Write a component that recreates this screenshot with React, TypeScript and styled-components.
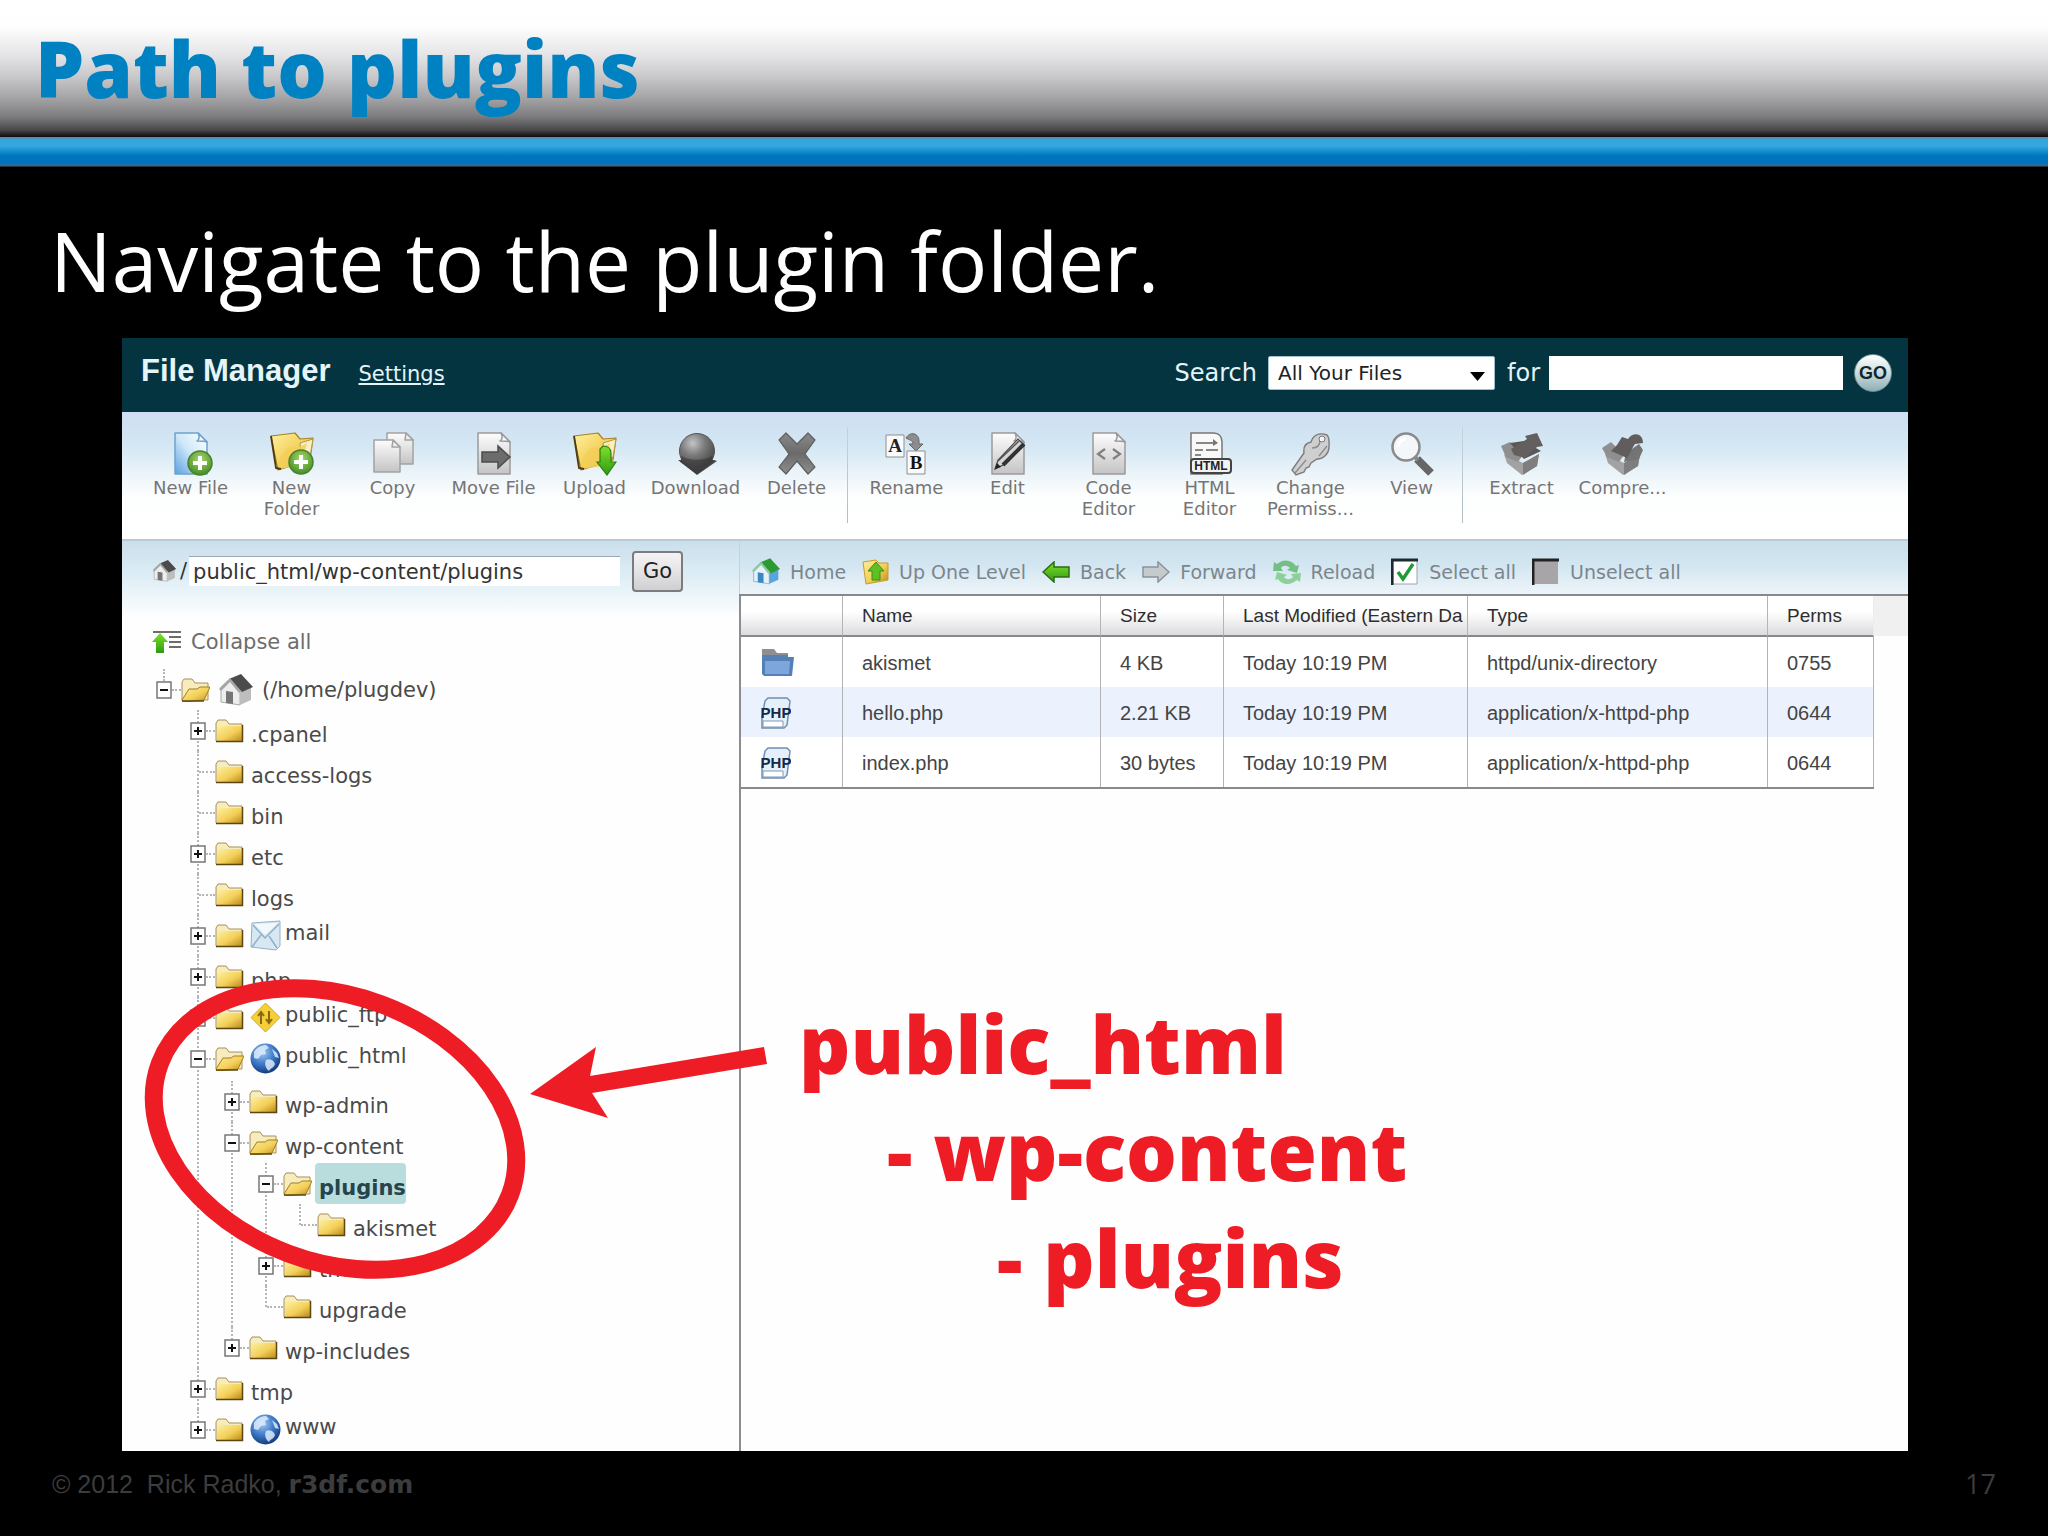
import React from "react";
import styled, { createGlobalStyle, css } from "styled-components";

const UI = `"DejaVu Sans", Verdana, sans-serif`;
const ARIAL = `"Liberation Sans", Arial, sans-serif`;
const SLIDE = `"Open Sans", "Noto Sans", sans-serif`;
const RED = "#ee1c25";

const GlobalStyle = createGlobalStyle`
  * { box-sizing: border-box; }
  body { margin: 0; background: #000; font-family: ${ARIAL}; }
  button { font: inherit; color: inherit; background: none; border: 0; padding: 0; cursor: pointer; }
  a { color: inherit; text-decoration: none; }
`;

/* ---------- slide ---------- */

const Slide = styled.main`
  display: flex;
  flex-direction: column;
  min-height: 100vh;
  background: #000;
`;

const SlideHeader = styled.header`
  display: flex;
  align-items: center;
  height: 137px;
  padding: 0 35px 2px;
  background: linear-gradient(#fff 0, #fefefe 26px, #e6e6e8 54px, #c8c8cb 77px, #a0a0a3 100px, #7b7b7e 117px, #484848 130px, #0c0c0c 137px);
`;

const SlideTitle = styled.h1`
  margin: 0;
  font: 800 78px/108px ${SLIDE};
  color: #0081c2;
`;

const BlueBar = styled.div`
  height: 30px;
  background: linear-gradient(#6a8394 0, #34a6de 3px, #34a8e0 9px, #0b85c8 16px, #0074be 19px, #0073bc 26px, #47647c 29px, #000 30px);
`;

const Lead = styled.p`
  margin: 0;
  padding: 37px 50px 21px;
  font: 400 82px/113px ${SLIDE};
  color: #fff;
`;

const Stage = styled.div`
  padding: 0 140px 0 122px;
`;

const SlideFooter = styled.footer`
  display: flex;
  justify-content: space-between;
  padding: 16px 52px;
  font: 25px/34px ${ARIAL};
  color: #3c3c3e;
  white-space: pre;
`;

const Site = styled.a`
  font: bold 25px/34px ${UI};
`;

const PageNumber = styled.span`
  font: 27px/34px ${SLIDE};
`;

/* ---------- file manager ---------- */

const Manager = styled.section`
  position: relative;
  background: #fefefe;
`;

const TopBar = styled.div`
  display: flex;
  justify-content: space-between;
  align-items: center;
  height: 74px;
  padding: 0 16px 4px 19px;
  background: #033440;
  color: #e4f5fa;
`;

const Brand = styled.div`
  display: flex;
  align-items: baseline;
  gap: 28px;
  padding-bottom: 5px;
`;

const BrandName = styled.h2`
  margin: 0;
  font: bold 31px/38px ${ARIAL};
`;

const SettingsLink = styled.a`
  font: 21px/26px ${UI};
  text-decoration: underline;
`;

const SearchForm = styled.form`
  display: flex;
  align-items: center;
  font: 24px/30px ${UI};
`;

const ScopeBox = styled.span`
  position: relative;
  display: flex;
  margin: 0 12px 0 11px;
  svg { position: absolute; right: 10px; top: 16px; pointer-events: none; }
`;

const ScopeSelect = styled.select`
  appearance: none;
  width: 227px;
  height: 34px;
  padding: 0 9px;
  border: 1px solid #9fc0cc;
  border-radius: 2px;
  background: #fff;
  color: #222;
  font: 20px/30px ${UI};
`;

const SearchInput = styled.input`
  width: 294px;
  height: 34px;
  margin: 0 11px 0 9px;
  padding: 0 8px;
  border: 0;
  background: #fff;
  font: 20px/30px ${UI};
`;

const RoundGo = styled.button`
  width: 38px;
  height: 38px;
  border: 1px solid #6d8a92;
  border-radius: 50%;
  background: linear-gradient(#fff, #cfdfe2 45%, #8fb0b6);
  color: #10262c;
  font: bold 18px/34px ${ARIAL};
  text-align: center;
`;

const Toolbar = styled.div`
  display: flex;
  align-items: flex-start;
  height: 127px;
  padding: 15px 18px 0;
  background: linear-gradient(#cddff1 0, #d4e7f3 34px, #fdfefe 84px, #fff);
`;

const Divider = styled.span`
  width: 1px;
  height: 96px;
  margin-right: 8px;
  background: linear-gradient(#c4d4dc, #b4bcc2);
`;

const Tool = styled.button`
  display: flex;
  flex-direction: column;
  align-items: center;
  width: 101px;
  padding-top: 5px;
  color: #757575;
  font: 18px/21px ${UI};
  text-align: center;
  svg { display: block; margin-bottom: 1px; }
  span { max-width: 96px; }
`;

const Panes = styled.div`
  display: grid;
  grid-template-columns: 617px minmax(0, 1fr);
  border-top: 2px solid #b7cad5;
`;

const Side = styled.aside`
  padding: 9px 0 1px 30px;
  background: linear-gradient(#cbdfeb 0, #dcedf5 34px, #fefefe 76px);
`;

const PathForm = styled.form`
  display: flex;
  align-items: center;
  height: 42px;
  color: #333;
  font: 21px/28px ${UI};
  svg { margin-right: 3px; }
  label { margin-right: 2px; }
`;

const PathInput = styled.input`
  width: 431px;
  height: 30px;
  margin-right: 12px;
  padding: 0 4px;
  border: 0;
  border-top: 1px solid #9aa9b1;
  background: #fff;
  color: #333;
  font: 21px/28px ${UI};
`;

const GoButton = styled.button`
  width: 51px;
  height: 41px;
  border: 2px solid #7c7c80;
  border-radius: 4px;
  background: linear-gradient(#f4f4f4, #e4e4e6 50%, #cfcfd2);
  color: #222;
  font: 21px/28px ${UI};
`;

const Collapse = styled.button`
  display: flex;
  align-items: center;
  gap: 10px;
  height: 42px;
  margin-top: 29px;
  color: #6d6d6d;
  font: 21px/28px ${UI};
`;

const Tree = styled.div`
  padding: 6px 0 0 4px;
`;

const Branch = styled.ul<{ $gap?: boolean }>`
  list-style: none;
  margin: 0;
  padding: ${(p) => (p.$gap ? 2 : 0)}px 0 0 34px;
`;

const Leaf = styled.li<{ $root?: boolean }>`
  position: relative;
  list-style: none;
  &::before {
    content: "";
    position: absolute;
    left: 7px;
    top: 0;
    bottom: 0;
    border-left: 2px dotted #b5b5b5;
  }
  ${(p) => p.$root ? css`&::before { bottom: auto; height: 12px; }` : css`&:last-child::before { bottom: auto; height: 21px; }`}
`;

const Row = styled.div`
  display: flex;
  align-items: center;
  height: 41px;
`;

const Toggle = styled.button`
  position: relative;
  display: flex;
  width: 16px;
  height: 18px;
  svg { display: block; }
`;

const Stem = styled.span<{ $bare?: boolean }>`
  width: ${(p) => (p.$bare ? 16 : 9)}px;
  margin-left: ${(p) => (p.$bare ? 9 : 0)}px;
  border-top: 2px dotted #b5b5b5;
`;

const Label = styled.a<{ $shift: "low" | "high" | "mid"; $active?: boolean }>`
  margin-left: ${(p) => (p.$shift === "low" ? 3 : p.$shift === "high" ? 0 : 5)}px;
  padding: ${(p) => (p.$shift === "low" ? "10px 0 0 4px" : p.$shift === "high" ? "0 0 4px 4px" : "2px 0 0 4px")};
  color: #4a4a4a;
  font: 21px/31px ${UI};
  ${(p) => p.$active && css`
    border-radius: 4px;
    background: #b9dcdd;
    color: #26444b;
    font-weight: bold;
  `}
`;

const Badge = styled.span<{ $wide?: boolean }>`
  display: flex;
  margin-left: ${(p) => (p.$wide ? 9 : 6)}px;
`;

const Main = styled.div`
  display: flex;
  flex-direction: column;
  min-width: 0;
`;

const Crumbs = styled.nav`
  display: flex;
  align-items: center;
  gap: 16px;
  height: 53px;
  padding: 8px 0 0 12px;
  border-left: 1px solid #c3d3dc;
  background: linear-gradient(#cbdfeb 0, #d2e6f1 24px, #eef4f9 53px);
`;

const Crumb = styled.button`
  display: flex;
  align-items: center;
  gap: 10px;
  color: #7b868c;
  font: 19px/24px ${UI};
  white-space: nowrap;
  svg { display: block; }
`;

const Listing = styled.div`
  flex: 1;
  border-top: 2px solid #848b90;
  border-left: 2px solid #8c8c92;
  background: linear-gradient(#f0f0f0 40px, #fefefe 40px);
`;

const Files = styled.table`
  width: calc(100% - 34px);
  table-layout: fixed;
  border-collapse: separate;
  border-spacing: 0;
  background: #fff;
  border-bottom: 2px solid #8a8a8a;
`;

const Head = styled.th`
  height: 41px;
  padding: 0 0 0 19px;
  border-right: 1px solid #b4b4b4;
  border-bottom: 2px solid #888;
  background: linear-gradient(#fff 40%, #dcdcde);
  color: #2e2e2e;
  font: 19px/24px ${ARIAL};
  text-align: left;
  white-space: nowrap;
  overflow: hidden;
  &:last-child { border-right-color: #ececec; }
`;

const Cell = styled.td`
  height: 50px;
  padding: 2px 0 0 19px;
  border-right: 1px solid #b4b4b4;
  color: #444;
  font: 20px/24px ${ARIAL};
  white-space: nowrap;
  overflow: hidden;
  tr:nth-child(even) > & { background: #ebf2fe; }
  svg { display: block; }
`;

const Markup = styled.svg`
  position: absolute;
  left: 0;
  top: 0;
  pointer-events: none;
`;

const Callout = styled.div`
  position: absolute;
  left: 677px;
  top: 651px;
  color: ${RED};
  font: 800 80px/107px ${SLIDE};
  white-space: nowrap;
`;

const CalloutLine = styled.div<{ $depth: number }>`
  padding-left: ${(p) => p.$depth * 110 - (p.$depth ? 22 : 0)}px;
`;

/* ---------- drawings ---------- */

const Defs = () => (
  <svg width="0" height="0" style={{ position: "absolute" }} aria-hidden="true">
    <defs>
      <linearGradient id="gold" x1="0" y1="0" x2="1" y2="1">
        <stop offset="0" stopColor="#fdf0a0" /><stop offset=".55" stopColor="#f3cf58" /><stop offset="1" stopColor="#b98a1c" />
      </linearGradient>
      <linearGradient id="blue" x1="1" y1="0" x2="0" y2="1">
        <stop offset="0" stopColor="#fff" /><stop offset=".5" stopColor="#cfe8f8" /><stop offset="1" stopColor="#5aa0e0" />
      </linearGradient>
      <linearGradient id="paper" x1="0" y1="0" x2="0" y2="1">
        <stop offset="0" stopColor="#fdfdfd" /><stop offset="1" stopColor="#c4c4c4" />
      </linearGradient>
      <linearGradient id="steel" x1="0" y1="0" x2="0" y2="1">
        <stop offset="0" stopColor="#8a8a8a" /><stop offset=".5" stopColor="#6a6a6a" /><stop offset="1" stopColor="#8f8f8f" />
      </linearGradient>
      <radialGradient id="ball" cx=".38" cy=".28" r=".75">
        <stop offset="0" stopColor="#c4c4c4" /><stop offset=".45" stopColor="#7c7c7c" /><stop offset="1" stopColor="#444" />
      </radialGradient>
      <radialGradient id="globe" cx=".4" cy=".3" r=".75">
        <stop offset="0" stopColor="#a8cbf2" /><stop offset=".5" stopColor="#3f7ccb" /><stop offset="1" stopColor="#0f3472" />
      </radialGradient>
      <radialGradient id="plus" cx=".5" cy=".35" r=".7">
        <stop offset="0" stopColor="#a8d66c" /><stop offset="1" stopColor="#3c8a1e" />
      </radialGradient>
      <linearGradient id="green" x1="0" y1="0" x2="0" y2="1">
        <stop offset="0" stopColor="#7ee02c" /><stop offset="1" stopColor="#2f9a10" />
      </linearGradient>
    </defs>
  </svg>
);

const Pic = ({ children, w = 44, h = 44 }: { children: React.ReactNode; w?: number; h?: number }) => (
  <svg width={w} height={h} viewBox={`0 0 ${w} ${h}`} fill="none" aria-hidden="true">{children}</svg>
);

const PlusDisc = ({ x, y }: { x: number; y: number }) => (
  <g>
    <circle cx={x} cy={y} r="12" fill="url(#plus)" stroke="#4b7f2e" strokeWidth="1.5" />
    <path d={`M${x} ${y - 7}v14M${x - 7} ${y}h14`} stroke="#fff" strokeWidth="4" />
  </g>
);

const Sheet = ({ fill = "url(#paper)", stroke = "#9a9a9a" }) => (
  <g stroke={stroke} strokeWidth="1.5" strokeLinejoin="round">
    <path d="M6 1h23l9 9v32H6z" fill={fill} />
    <path d="M29 1c2 4 1 7-1 8 3 0 7 0 10 1z" fill="#f6f6f6" />
  </g>
);

const BigFolder = () => (
  <g strokeLinejoin="round">
    <path d="M1 4l24-3 5 6 13-1-3 22-32 10z" fill="url(#gold)" stroke="#a8821e" strokeWidth="1.2" />
    <path d="M30 11l13-4-3 18-8 4z" fill="#f8f0c4" stroke="#b09648" />
    <path d="M8 37c-1-8 4-17 12-22 5 2 12-1 17-4l-6 23z" fill="#f3cf58" opacity=".85" />
    <path d="M1 4l5 32 5 1" stroke="#4c3a10" strokeWidth="1.8" />
  </g>
);

const toolIcons: Record<string, React.ReactNode> = {
  newFile: <><Sheet fill="url(#blue)" stroke="#6fa3cc" /><PlusDisc x={31} y={31} /></>,
  newFolder: <><BigFolder /><PlusDisc x={31} y={30} /></>,
  copy: (
    <g stroke="#a2a2a2" strokeWidth="1.5" strokeLinejoin="round">
      <path d="M16 1h19l7 7v24H16z" fill="url(#paper)" /><path d="M35 1l-1 7h8z" fill="#eee" />
      <path d="M3 8h19l7 7v25H3z" fill="url(#paper)" /><path d="M22 8l-1 7h8z" fill="#eee" />
    </g>
  ),
  move: <><Sheet /><path d="M10 20h16v-6l12 11-12 11v-6H10z" fill="#6c6c6c" stroke="#4c4c4c" strokeWidth="1.5" /></>,
  upload: <><BigFolder /><path d="M30 14c5 0 8 3 8 7v9h5L34 43 24 30h3V17z" fill="url(#green)" stroke="#2e7d14" strokeWidth="1.2" /></>,
  download: (
    <>
      <path d="M4 28l6 0v-8h25v8h5l3 1-20 14z" fill="#484848" />
      <circle cx="23" cy="19" r="17.5" fill="url(#ball)" stroke="#555" />
      <path d="M8 24c7 5 22 5 30 0l1 6-16 12L6 30z" fill="#333" opacity=".55" />
    </>
  ),
  del: <path d="M11 1l11 11L33 1l7 7-10 14 10 13-7 7-11-13-11 13-7-7 10-13L4 8z" fill="url(#steel)" stroke="#5d5d5d" strokeWidth="1.2" strokeLinejoin="round" />,
  rename: (
    <g fontFamily="Liberation Serif, serif" fontWeight="bold" fontSize="19" textAnchor="middle">
      <path d="M1 3h18v22H1z" fill="#fafafa" stroke="#8e8e8e" /><text x="10" y="20" fill="#222">A</text>
      <path d="M21 6c4-7 13-5 13 3v3h4l-7 7-7-7h4c0-4-4-4-7-6z" fill="#8d8d8d" stroke="#666" />
      <path d="M22 19h18v23H22z" fill="#fafafa" stroke="#8e8e8e" /><text x="31" y="37" fill="#111">B</text>
    </g>
  ),
  edit: (
    <>
      <Sheet />
      <path d="M9 37l3-9L32 7l5 5-20 21z" fill="#d5d5d5" stroke="#444" strokeWidth="1.2" />
      <path d="M17 33L38 12" stroke="#333" strokeWidth="4" />
      <path d="M12 29L33 9" stroke="#555" strokeWidth="1.5" /><path d="M9 37l2-6 4 4z" fill="#222" />
    </>
  ),
  code: <><Sheet /><path d="M18 17l-7 5 7 5M26 17l7 5-7 5" stroke="#808080" strokeWidth="2.2" /></>,
  html: (
    <>
      <path d="M3 1h22c6 0 9 4 9 9v32H3z" fill="#f8f8f8" stroke="#777" strokeWidth="1.5" />
      <path d="M8 11h19M7 18h8M18 18h12M7 23h6" stroke="#888" strokeWidth="2" /><path d="M25 7l5 4-5 3z" fill="#777" />
      <rect x="3" y="27" width="40" height="14" rx="3" fill="#f2f2f2" stroke="#444" strokeWidth="2" />
      <text x="23" y="38" fontFamily="Liberation Sans" fontWeight="bold" fontSize="12" textAnchor="middle" fill="#222">HTML</text>
    </>
  ),
  perm: (
    <>
      <path d="M38 3c3 3 2 8 2 12 0 6-5 12-12 12l-6 4-2 4-3 1-2 4-8 3-4-5 12-17c-1-7 2-10 7-11 2-6 7-10 16-7z" fill="#cfcfcf" stroke="#7c7c7c" strokeWidth="1.4" />
      <path d="M17 28L6 41M31 8c0 6-4 8-8 8M38 14l-8 10" stroke="#8c8c8c" strokeWidth="1.4" /><circle cx="33" cy="7" r="3" fill="#eef5fa" stroke="#777" />
    </>
  ),
  view: (
    <>
      <path d="M27 27l14 14" stroke="#666" strokeWidth="8" /><path d="M25 25l3 3" stroke="#888" strokeWidth="4" />
      <circle cx="16" cy="15" r="13.5" fill="#f4f7fa" stroke="#8b8b8b" strokeWidth="2.5" /><path d="M8 15c0-5 4-8 8-8" stroke="#fff" strokeWidth="3" />
    </>
  ),
  extract: (
    <>
      <path d="M4 22l19 9 16-9-2 12-15 9-15-12z" fill="#a2a2a2" /><path d="M23 31v12l14-9 2-12z" fill="#7e7e7e" />
      <path d="M1 14l9-4 13 13-5 7-12-5z" fill="#8f8f8f" /><path d="M10 11l14-2 17 10-17 8z" fill="#5c5656" />
      <path d="M14 23l-3-6 16-10-2-3 12-3 6 13-6 1-12 11z" fill="#645f5f" />
    </>
  ),
  compress: (
    <>
      <path d="M4 22l19 9 16-9-2 12-15 9-15-12z" fill="#a2a2a2" /><path d="M23 31v12l14-9 2-12z" fill="#7e7e7e" />
      <path d="M1 16l9-6 13 13-5 7-12-5z" fill="#8f8f8f" /><path d="M38 12l4 6-4 9-15 3 2-9z" fill="#747474" />
      <path d="M16 13l5-8 6 2c6-8 15-5 15 4l-8 1c-3 4-4 8-8 14L10 19z" fill="#625d5d" />
    </>
  ),
};

const FolderPic = ({ open }: { open?: boolean }) => (
  <Pic w={29} h={24}>
    <path d="M1 22V4l2-3h8l3 4h13v17z" fill="#f6ecbd" stroke="#a8905a" />
    {open ? (
      <path d="M1 22l7-11h8l3-2h10l-6 13-21 2z" fill="url(#gold)" stroke="#a87d1c" />
    ) : (
      <path d="M2 7h25v15H2z" fill="url(#gold)" />
    )}
    <path d={open ? "M1 23h22" : "M1 22.500h26.500V6"} stroke="#5d4611" strokeWidth="1.500" />
  </Pic>
);

const HousePic = ({ w = 34, h = 32, green }: { w?: number; h?: number; green?: boolean }) => (
  <svg width={w} height={h} viewBox="0 0 34 32" fill="none" aria-hidden="true">
    <path d="M2 13L11 5l10 12v14L2 28z" fill={green ? "#e4f1fb" : "#ededed"} stroke={green ? "#7fb0d4" : "#aaa"} />
    <path d="M21 17l11-4v13l-11 5z" fill={green ? "#58a4dc" : "#bdbdbd"} />
    <path d="M10 5l12-5 12 13-11 5z" fill={green ? "#2b9a2f" : "#4b4b4b"} />
    <path d="M0 15L11 4l11 13-2 2L11 8 2 17z" fill={green ? "#8fc7a4" : "#a5a5a5"} />
    <path d="M7 17l7 1v12l-7-1z" fill={green ? "#3c86c4" : "#757575"} />
  </svg>
);

const MailPic = () => (
  <Pic w={31} h={31}>
    <path d="M2 3l28-2v25l-4 4-25-3z" fill="#d7e8f3" stroke="#93b1c6" />
    <path d="M3 5l12 13L29 4M2 27l9-12M27 28l-8-12" stroke="#8fb0c8" strokeWidth="1.500" />
    <path d="M4 4l11 11L28 3z" fill="#f2f8fc" />
  </Pic>
);

const GlobePic = () => (
  <Pic w={31} h={31}>
    <circle cx="15.500" cy="15.500" r="15" fill="url(#globe)" />
    <path d="M4 9c3-5 8-7 12-7l3 3-4 2 1 4-5 1-3 4-4-1zM16 17c5-2 8 1 9 4-1 4-5 4-6 7-3-2-5-7-3-11zM22 6l5 4 2 5-4-1z" fill="#dcebfb" opacity=".85" />
  </Pic>
);

const FtpPic = () => (
  <Pic w={31} h={31}>
    <path d="M15.500 1L30 15.500 15.500 30 1 15.500z" fill="#f3cf3a" stroke="#d6a71c" strokeLinejoin="round" />
    <path d="M11 22V12M8 14l3-4 3 4M19 9v10M16 17l3 4 3-4" stroke="#8a6710" strokeWidth="2" />
  </Pic>
);

const crumbIcons: Record<string, React.ReactNode> = {
  home: <HousePic w={28} h={27} green />,
  up: (
    <Pic w={27} h={26}>
      <path d="M1 3l13-2 3 3h9v17L4 25z" fill="url(#gold)" stroke="#c79b2c" />
      <path d="M14 3l8 9h-4v9h-8v-9H6z" fill="#5fc024" stroke="#3f8d16" />
    </Pic>
  ),
  back: <Pic w={28} h={22}><path d="M1 11L12 1v5h15v10H12v5z" fill="url(#green)" stroke="#2d6b14" strokeWidth="1.500" /></Pic>,
  forward: <Pic w={28} h={22}><path d="M27 11L16 1v5H1v10h15v5z" fill="#c5cacd" stroke="#8c9398" strokeWidth="1.500" /></Pic>,
  reload: (
    <Pic w={28} h={26}>
      <path d="M1 3l3 2c7-6 15-4 19 2l3-1-2 8-10-3 3-2c-3-3-7-3-9 0l2 3L0 12z" fill="#74bf86" />
      <path d="M27 23l-3-2c-7 6-15 5-19-1l-3 1 2-8 10 3-3 2c3 3 6 3 9 0l-2-3 10-1z" fill="#8ed09b" />
    </Pic>
  ),
  check: (
    <Pic w={28} h={28}>
      <path d="M2 2h24v24H2z" fill="#fff" stroke="#9aa5aa" /><path d="M1 27V2h26" stroke="#1d2a30" strokeWidth="3" />
      <path d="M7 14l5 7L22 6" stroke="#1f9a35" strokeWidth="3.500" />
    </Pic>
  ),
  uncheck: <Pic w={28} h={28}><path d="M2 2h24v24H2z" fill="#a8a5a8" /><path d="M1 27V2h26" stroke="#222" strokeWidth="3" /></Pic>,
};

const BlueFolderPic = () => (
  <Pic w={34} h={30}>
    <path d="M2 1h12l3 4h11v6H2z" fill="#8d8f94" /><path d="M2 7h26v2h6l-2 19H4L2 26z" fill="#5580b5" />
    <path d="M5 13h25l-1 13H5z" fill="#7da7dc" />
  </Pic>
);

const PhpPic = () => (
  <Pic w={31} h={32}>
    <path d="M8 1h19l3 3-3 24-3 3H2V20L5 4z" fill="#e6f0fa" stroke="#6f8fb0" strokeWidth="1.500" />
    <path d="M3 24h20v6H3z" fill="#fff" stroke="#7c99b8" />
    <text x="16" y="21" fontFamily="Liberation Sans" fontWeight="bold" fontSize="15" textAnchor="middle" fill="#14284a">PHP</text>
  </Pic>
);

/* ---------- data ---------- */

const tools: (null | [string, string])[] = [
  ["newFile", "New File"], ["newFolder", "New Folder"], ["copy", "Copy"], ["move", "Move File"],
  ["upload", "Upload"], ["download", "Download"], ["del", "Delete"], null,
  ["rename", "Rename"], ["edit", "Edit"], ["code", "Code Editor"], ["html", "HTML Editor"],
  ["perm", "Change Permiss..."], ["view", "View"], null,
  ["extract", "Extract"], ["compress", "Compre..."],
];

const crumbs: [string, string][] = [
  ["home", "Home"], ["up", "Up One Level"], ["back", "Back"], ["forward", "Forward"],
  ["reload", "Reload"], ["check", "Select all"], ["uncheck", "Unselect all"],
];

type Node = { name: string; toggle?: "plus" | "minus"; badge?: React.ReactNode; active?: boolean; root?: boolean; kids?: Node[] };

const tree: Node = {
  name: "(/home/plugdev)", toggle: "minus", root: true, badge: <HousePic />,
  kids: [
    { name: ".cpanel", toggle: "plus" },
    { name: "access-logs" },
    { name: "bin" },
    { name: "etc", toggle: "plus" },
    { name: "logs" },
    { name: "mail", toggle: "plus", badge: <MailPic /> },
    { name: "php", toggle: "plus" },
    { name: "public_ftp", toggle: "plus", badge: <FtpPic /> },
    {
      name: "public_html", toggle: "minus", badge: <GlobePic />,
      kids: [
        { name: "wp-admin", toggle: "plus" },
        {
          name: "wp-content", toggle: "minus",
          kids: [
            { name: "plugins", toggle: "minus", active: true, kids: [{ name: "akismet" }] },
            { name: "themes", toggle: "plus" },
            { name: "upgrade" },
          ],
        },
        { name: "wp-includes", toggle: "plus" },
      ],
    },
    { name: "tmp", toggle: "plus" },
    { name: "www", toggle: "plus", badge: <GlobePic /> },
  ],
};

const files = [
  { icon: <BlueFolderPic />, cols: ["akismet", "4 KB", "Today 10:19 PM", "httpd/unix-directory", "0755"] },
  { icon: <PhpPic />, cols: ["hello.php", "2.21 KB", "Today 10:19 PM", "application/x-httpd-php", "0644"] },
  { icon: <PhpPic />, cols: ["index.php", "30 bytes", "Today 10:19 PM", "application/x-httpd-php", "0644"] },
];

const TreeNode = ({ node }: { node: Node }) => (
  <Leaf $root={node.root}>
    <Row>
      {node.toggle && (
        <Toggle type="button" aria-label={`Toggle ${node.name}`}>
          <Pic w={16} h={18}>
            <path d="M1 1h14v16H1z" fill="#fff" stroke="#777" strokeWidth="1.500" />
            <path d={node.toggle === "plus" ? "M4 9h8M8 5v8" : "M4 9h8"} stroke="#111" strokeWidth="2" />
          </Pic>
        </Toggle>
      )}
      <Stem $bare={!node.toggle} />
      <FolderPic open={node.toggle === "minus"} />
      {node.badge && <Badge $wide={node.root}>{node.badge}</Badge>}
      <Label href="#" $active={node.active} $shift={node.root ? "mid" : node.badge ? "high" : "low"}>{node.name}</Label>
    </Row>
    {node.kids && (
      <Branch $gap={!!node.badge && !node.root}>
        {node.kids.map((kid) => <TreeNode key={kid.name} node={kid} />)}
      </Branch>
    )}
  </Leaf>
);

export default function App() {
  return (
    <Slide>
      <GlobalStyle />
      <Defs />
      <SlideHeader><SlideTitle>Path to plugins</SlideTitle></SlideHeader>
      <BlueBar />
      <Lead>Navigate to the plugin folder.</Lead>
      <Stage>
        <Manager>
          <TopBar>
            <Brand>
              <BrandName>File Manager</BrandName>
              <SettingsLink href="#">Settings</SettingsLink>
            </Brand>
            <SearchForm onSubmit={(e) => e.preventDefault()}>
              <label htmlFor="scope">Search</label>
              <ScopeBox>
                <ScopeSelect id="scope"><option>All Your Files</option></ScopeSelect>
                <Pic w={15} h={9}><path d="M0 0h15L7.500 9z" fill="#000" /></Pic>
              </ScopeBox>
              <label htmlFor="term">for</label>
              <SearchInput id="term" type="text" />
              <RoundGo type="submit">GO</RoundGo>
            </SearchForm>
          </TopBar>
          <Toolbar>
            {tools.map((t, i) =>
              t ? (
                <Tool key={t[0]} type="button"><Pic>{toolIcons[t[0]]}</Pic><span>{t[1]}</span></Tool>
              ) : (
                <Divider key={i} />
              )
            )}
          </Toolbar>
          <Panes>
            <Side>
              <PathForm onSubmit={(e) => e.preventDefault()}>
                <HousePic w={25} h={22} />
                <label htmlFor="path">/</label>
                <PathInput id="path" type="text" defaultValue="public_html/wp-content/plugins" />
                <GoButton type="submit">Go</GoButton>
              </PathForm>
              <Collapse type="button">
                <Pic w={29} h={23}>
                  <path d="M1 1h28M17 6h12M17 11h12M17 16h12" stroke="#6c6c6c" strokeWidth="2" />
                  <path d="M8 2l8 9h-4v11H4V11H0z" fill="url(#green)" />
                </Pic>
                Collapse all
              </Collapse>
              <Tree><TreeNode node={tree} /></Tree>
            </Side>
            <Main>
              <Crumbs>
                {crumbs.map(([icon, text]) => (
                  <Crumb key={icon} type="button">{crumbIcons[icon]}{text}</Crumb>
                ))}
              </Crumbs>
              <Listing>
                <Files>
                  <colgroup>
                    <col style={{ width: 102 }} /><col /><col style={{ width: 123 }} />
                    <col style={{ width: 244 }} /><col style={{ width: 300 }} /><col style={{ width: 106 }} />
                  </colgroup>
                  <thead>
                    <tr>
                      <Head aria-label="Kind" /><Head>Name</Head><Head>Size</Head>
                      <Head>Last Modified (Eastern Da</Head><Head>Type</Head><Head>Perms</Head>
                    </tr>
                  </thead>
                  <tbody>
                    {files.map((f) => (
                      <tr key={f.cols[0]}>
                        <Cell>{f.icon}</Cell>
                        {f.cols.map((c, i) => <Cell key={i}>{c}</Cell>)}
                      </tr>
                    ))}
                  </tbody>
                </Files>
              </Listing>
            </Main>
          </Panes>
          <Markup width="660" height="960" viewBox="0 0 660 960" fill="none" aria-hidden="true">
            <ellipse cx="213" cy="791" rx="187" ry="133" transform="rotate(20.500 213 791)" stroke={RED} strokeWidth="18" />
            <path d="M408 756L474 709 468 738 642 709 645 726 470 755 486 780z" fill={RED} />
          </Markup>
          <Callout>
            <CalloutLine $depth={0}>public_html</CalloutLine>
            <CalloutLine $depth={1}>- wp-content</CalloutLine>
            <CalloutLine $depth={2}>- plugins</CalloutLine>
          </Callout>
        </Manager>
      </Stage>
      <SlideFooter>
        <span>{"© 2012  Rick Radko, "}<Site href="#">r3df.com</Site></span>
        <PageNumber>17</PageNumber>
      </SlideFooter>
    </Slide>
  );
}
